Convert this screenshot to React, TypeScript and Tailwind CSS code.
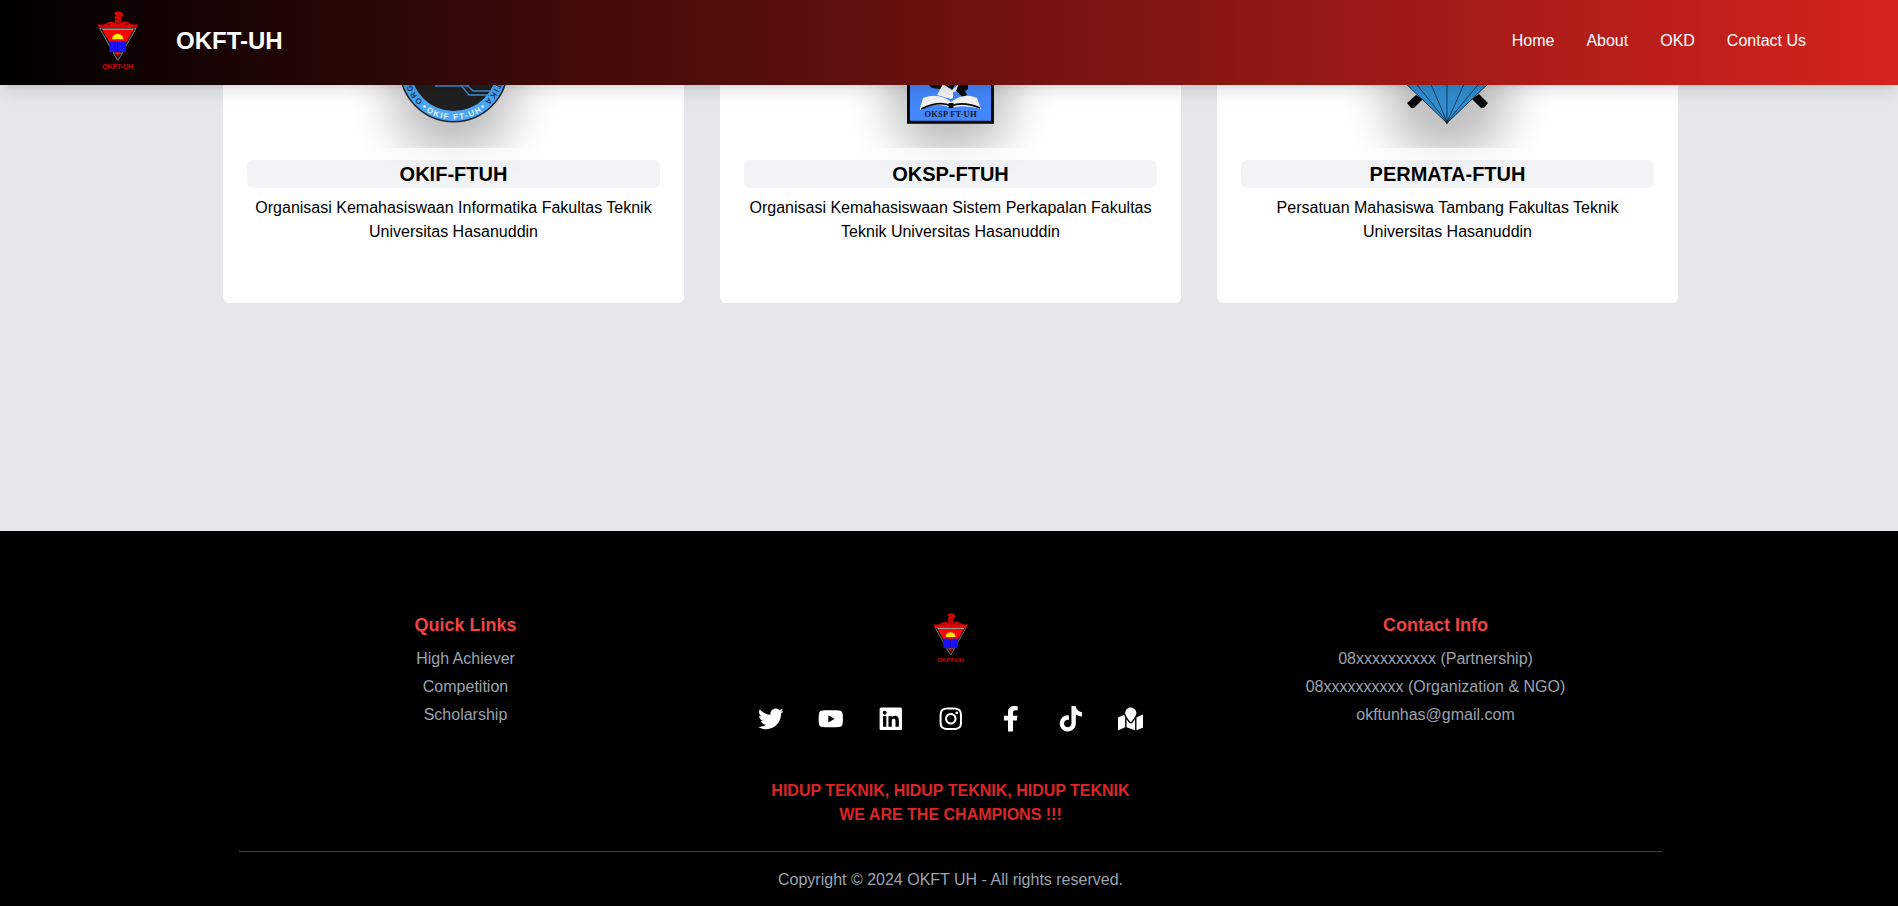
import React from "react";
import {
  FaTwitter,
  FaYoutube,
  FaLinkedin,
  FaInstagram,
  FaFacebookF,
  FaTiktok,
  FaMapMarked,
} from "react-icons/fa";

function Emblem({ className }: { className: string }) {
  return (
    <svg className={className} viewBox="108 30 132 182">
      <path
        d="M112 72 Q122 76 134 73 Q142 64 158 65 L163 70 L166 58 L163 53 L168 46 L163 43 L165 37 L173 34 L183 36 L190 42 L188 50 L182 50 L184 60 L183 70 L190 65 Q202 63 213 72 Q224 76 235 72 L230 83 H117 Z"
        fill="#dc0505"
      />
      <path d="M166 56 L182 62 M167 67 L181 71 M171 40 L177 44 M140 71 L152 75 M194 75 L206 70" stroke="#5d0505" strokeWidth="2.5" />
      <path d="M119 85 H228 L173.500 181 Z" fill="#111" stroke="#999" strokeWidth="2.500" />
      <path d="M124 87 H223 L173.500 173 Z" fill="none" stroke="#242424" strokeWidth="3" />
      <path d="M127 90 H220 L173.500 168 Z" fill="#f80505" />
      <path d="M127 88 H220" stroke="#d3c5c5" strokeWidth="2.500" />
      <path d="M156 118 A17 17 0 0 1 190 118 Z" fill="#ffee0a" />
      <path d="M148 124 Q161 122 173 125 Q185 122 198 124 V157 Q185 155 173 157 Q161 155 148 157 Z" fill="#1a10fc" />
      <path d="M173 126 V157" stroke="#080065" strokeWidth="2" />
      <path d="M160 160 H187 L173.500 181 Z" fill="#191313" stroke="#777" strokeWidth="2.500" />
      <path d="M167 162 H180 L173.500 169 Z" fill="#e30808" />
      <text x="173" y="206" textAnchor="middle" textLength="94" fontSize="22" fontWeight="700" fill="#cc0808">
        OKFT-UH
      </text>
    </svg>
  );
}

function InformaticsArt() {
  return (
    <g>
      <circle cx="206.700" cy="-17" r="53.800" fill="#4ba6f8" stroke="#1b1f24" strokeWidth="1.500" />
      <circle cx="206.700" cy="-17" r="43" fill="#202020" />
      <path d="M188 1 H222 M212 -2 L222 10 H245 M216 -4 L226 6 H244" fill="none" stroke="#3f8fd4" strokeWidth="1.300" />
      <path id="ringBottom" d="M155.200 -17 A51.500 51.500 0 0 0 258.200 -17" fill="none" />
      <path id="ringOuter" d="M206.700 28.500 A45.500 45.500 0 0 1 206.700 -62.500 A45.500 45.500 0 0 1 206.700 28.500" fill="none" />
      <g fontSize="8" fontWeight="700">
        <text fill="#e8f4ff" letterSpacing="1.500">
          <textPath href="#ringBottom" startOffset="50.500%" textAnchor="middle">
            OKIF FT-UH
          </textPath>
        </text>
        <text fill="#15395c" letterSpacing="1.200">
          <textPath href="#ringOuter" startOffset="34">ORG</textPath>
        </text>
        <text fill="#15395c" letterSpacing="1.200">
          <textPath href="#ringOuter" startOffset="229">TIKA</textPath>
        </text>
      </g>
      <circle cx="177.500" cy="21.500" r="1.300" fill="#fff" />
      <circle cx="235.500" cy="21.500" r="1.300" fill="#fff" />
    </g>
  );
}

function ShippingArt() {
  return (
    <g>
      <rect x="164.500" y="-60" width="84" height="97.300" fill="#4486fb" stroke="#0c0c0c" strokeWidth="3" />
      <path d="M182 -3 L199 -3 L206 2 L208 12 L196 4 L188 3 Z" fill="#0a0a0a" />
      <path d="M199 -1 L208 5 L216 -2 L217 8 L207 14 L193 10 Z" fill="#f5f5f5" />
      <path d="M203 -2 H212 L208 5 Z M215 -2 H224 V4 L221 6 L223 10 L219 12 L215 9 L212 6 Z" fill="#0a0a0a" />
      <path d="M209 7 Q214 5 216 11 L209 14 Z" fill="#4486fb" />
      <path d="M176 23 L179 13 Q195 7 207 17 Q220 7 233 13 L237 24 Q219 19 207 23 Q194 16 176 25 Z" fill="#f3f3f3" />
      <path d="M177 24 Q196 15 207 21 Q219 16 236 23" fill="none" stroke="#0a0a0a" strokeWidth="1.800" />
      <rect x="204.500" y="18" width="5" height="5" fill="#0a0a0a" />
      <text x="206.500" y="32" textAnchor="middle" textLength="52" fontSize="8.500" fontWeight="700" fontFamily="Liberation Serif, serif" fill="#10192e">
        OKSP FT-UH
      </text>
    </g>
  );
}

function MiningArt() {
  return (
    <g>
      <path d="M166 18 L175 10 L182 14 L173 23 H170 Z M247 18 L238 9 L231 14 L240 23 H243 Z" fill="#050505" />
      <path d="M162 -4 H250 L206 38 Z" fill="#318dd0" stroke="#102c40" />
      <path d="M174.500 -2 L206 37 L189.500 -2 M206 -2 V37 L223.500 -2 M206 37 L238.500 -2" fill="none" stroke="#10344e" strokeWidth="0.900" />
      <circle cx="206" cy="37.500" r="1.200" fill="#111" />
    </g>
  );
}

const cards = [
  {
    name: "OKIF-FTUH",
    lines: ["Organisasi Kemahasiswaan Informatika Fakultas Teknik", "Universitas Hasanuddin"],
    art: <InformaticsArt />,
  },
  {
    name: "OKSP-FTUH",
    lines: ["Organisasi Kemahasiswaan Sistem Perkapalan Fakultas", "Teknik Universitas Hasanuddin"],
    art: <ShippingArt />,
  },
  {
    name: "PERMATA-FTUH",
    lines: ["Persatuan Mahasiswa Tambang Fakultas Teknik", "Universitas Hasanuddin"],
    art: <MiningArt />,
  },
];

const socials = [FaTwitter, FaYoutube, FaLinkedin, FaInstagram, FaFacebookF, FaTiktok, FaMapMarked];

function LinkColumn({ title, items }: { title: string; items: string[] }) {
  return (
    <div className="text-center">
      <h3 className="mb-2 text-lg leading-7 font-bold text-[#ef4444]">{title}</h3>
      <ul className="space-y-1">
        {items.map((item) => (
          <li key={item}>{item}</li>
        ))}
      </ul>
    </div>
  );
}

export default function App() {
  return (
    <div className="flex h-[906px] flex-col overflow-hidden bg-[#e5e7eb] font-['Liberation_Sans',Arial,sans-serif] text-base text-black">
      <header className="relative z-10 flex h-[85px] shrink-0 items-start bg-[linear-gradient(to_right,#000,#d6231f)] pr-[92px] pl-24 text-white shadow-[0_10px_15px_-3px_rgba(0,0,0,0.1),0_4px_6px_-4px_rgba(0,0,0,0.1)]">
        <Emblem className="mt-2.5 h-[60.700px] w-11" />
        <h1 className="mt-[25px] ml-9 text-2xl font-bold">OKFT-UH</h1>
        <nav className="mt-[29px] ml-auto flex gap-8">
          <a>Home</a>
          <a>About</a>
          <a>OKD</a>
          <a>Contact Us</a>
        </nav>
      </header>

      <main className="h-[446px] shrink-0 pr-[220px] pl-[223px]">
        <div className="grid grid-cols-3 gap-9">
          {cards.map((card) => (
            <article key={card.name} className="h-[218px] rounded-b-md bg-white px-6 text-center">
              <svg className="block h-[75px] w-full overflow-visible" viewBox="0 0 413 75">
                <defs>
                  <radialGradient id={card.name} cx="206.500" cy="10" r="106" gradientUnits="userSpaceOnUse">
                    <stop offset="0" stopColor="#000" stopOpacity="0.28" />
                    <stop offset="0.350" stopColor="#000" stopOpacity="0.215" />
                    <stop offset="0.550" stopColor="#000" stopOpacity="0.125" />
                    <stop offset="0.750" stopColor="#000" stopOpacity="0.042" />
                    <stop offset="0.880" stopColor="#000" stopOpacity="0.012" />
                    <stop offset="1" stopColor="#000" stopOpacity="0" />
                  </radialGradient>
                  <radialGradient id={card.name + "-fade"} cx="206.500" cy="55" r="1" gradientUnits="userSpaceOnUse" gradientTransform="translate(206.500 55) scale(100 50) translate(-206.500 -55)">
                    <stop offset="0" stopColor="#000" stopOpacity="0.045" />
                    <stop offset="1" stopColor="#000" stopOpacity="0" />
                  </radialGradient>
                </defs>
                <rect x="100" y="0" width="213" height="63" fill={"url(#" + card.name + ")"} />
                <rect x="100" y="63" width="213" height="42" fill={"url(#" + card.name + "-fade)"} />
                {card.art}
              </svg>
              <h2 className="mb-2 rounded-md bg-[#f3f4f6] text-xl leading-7 font-bold">{card.name}</h2>
              <p>
                {card.lines[0]}
                <br />
                {card.lines[1]}
              </p>
            </article>
          ))}
        </div>
      </main>

      <footer className="grow bg-black pr-[236px] pl-[239px] text-[#9ca3af]">
        <div className="grid h-[321px] grid-cols-3 gap-8 border-b border-[#374151] pt-20">
          <LinkColumn title="Quick Links" items={["High Achiever", "Competition", "Scholarship"]} />
          <div className="flex flex-col items-center">
            <Emblem className="mt-[0.500px] h-[51.800px] w-[37.600px]" />
            <div className="mt-[43.200px] grid grid-cols-7 text-white">
              {socials.map((Icon, i) => (
                <span key={i} className="flex w-[60px] justify-center">
                  <Icon className="size-[25.600px]" />
                </span>
              ))}
            </div>
            <p className="mt-[47px] text-center font-bold text-[#dc2626]">
              HIDUP TEKNIK, HIDUP TEKNIK, HIDUP TEKNIK
              <br />
              WE ARE THE CHAMPIONS !!!
            </p>
          </div>
          <LinkColumn
            title="Contact Info"
            items={["08xxxxxxxxxx (Partnership)", "08xxxxxxxxxx (Organization & NGO)", "okftunhas@gmail.com"]}
          />
        </div>
        <p className="pt-4 text-center">Copyright © 2024 OKFT UH - All rights reserved.</p>
      </footer>
    </div>
  );
}
